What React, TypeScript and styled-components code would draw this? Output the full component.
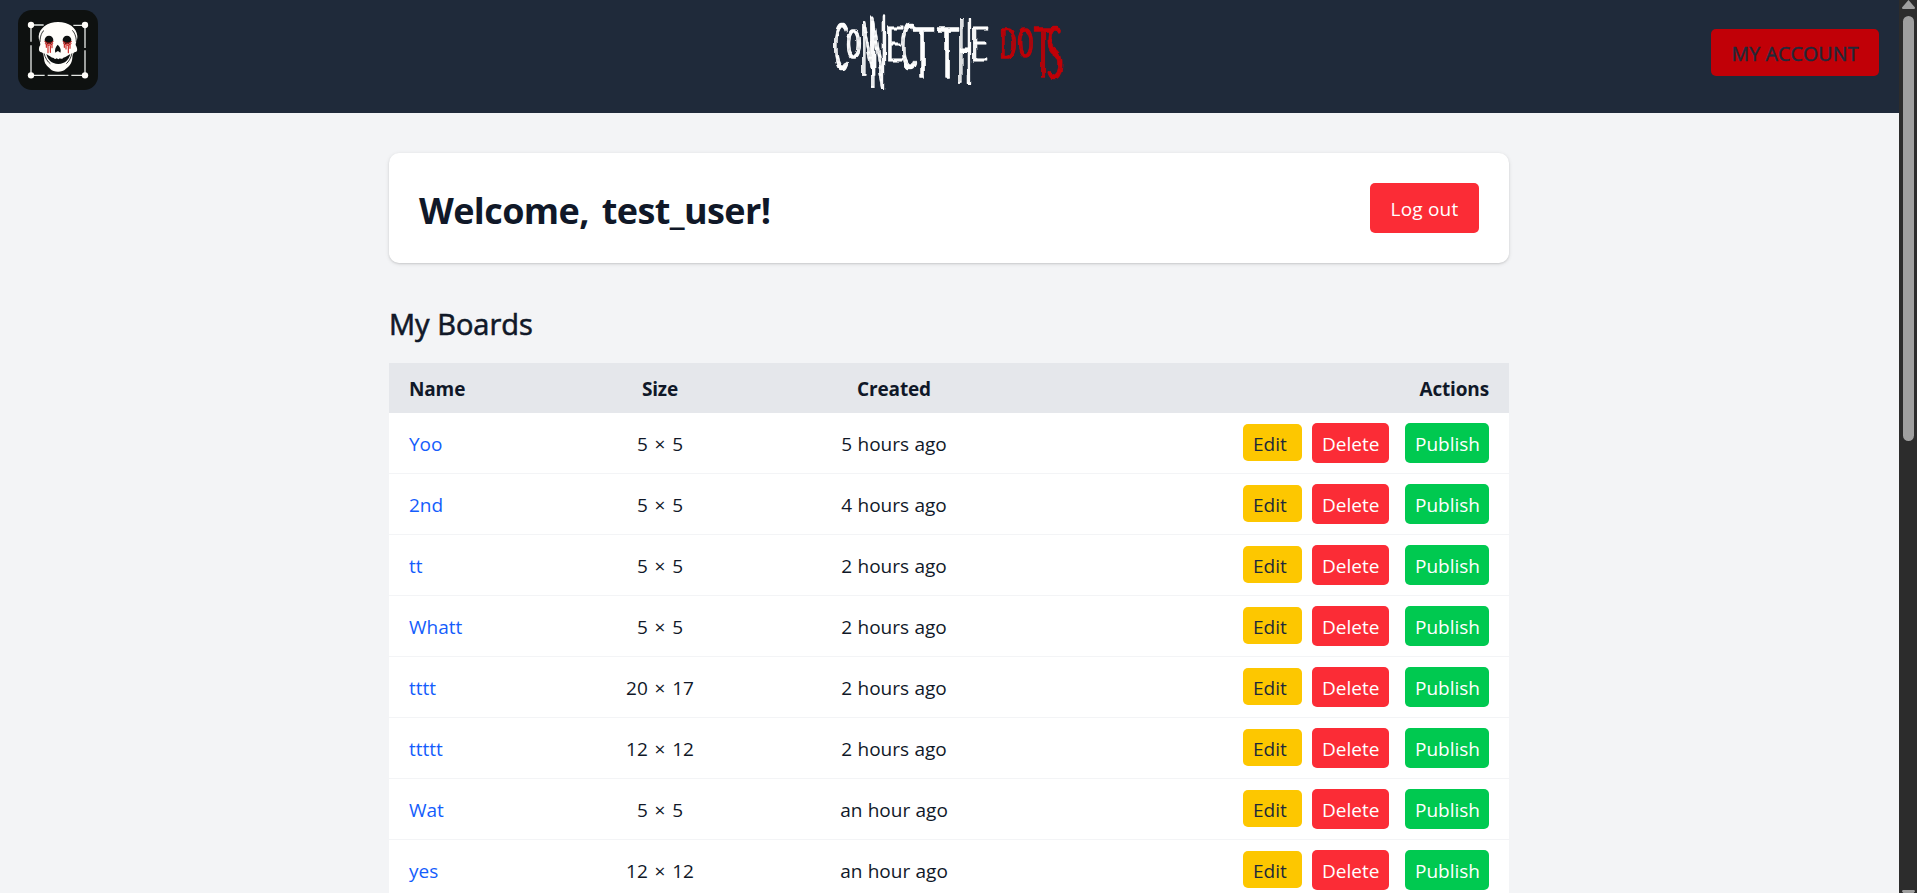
import React from "react";
import styled, { createGlobalStyle } from "styled-components";

const GlobalStyle = createGlobalStyle`
  *, *::before, *::after { box-sizing: border-box; }
  html, body { margin: 0; height: 100%; overflow: hidden; }
  body {
    font-family: "Open Sans", "Noto Sans", sans-serif;
    font-size: 19px;
    line-height: 30px;
    color: #101828;
    background: #f3f4f6;
  }
`;

const Window = styled.div`
  display: flex;
  height: 893px;
  overflow: hidden;
`;

const Page = styled.div`
  flex: 1;
  min-width: 0;
  overflow: hidden;
`;

const Header = styled.header`
  display: grid;
  grid-template-columns: 1fr auto 1fr;
  align-items: start;
  height: 113px;
  padding: 10px 20px 0 18px;
  background: #1f2a3a;
`;

const Emblem = styled.svg`
  display: block;
  width: 80px;
  height: 80px;
`;

const Wordmark = styled.svg`
  display: block;
  width: 240px;
  height: 84px;
  overflow: visible;
  font-family: Lato, "Open Sans", sans-serif;
  font-weight: 300;
`;

const AccountButton = styled.button`
  justify-self: end;
  width: 168px;
  height: 47px;
  margin-top: 19px;
  padding: 3px 0 0;
  border: 0;
  border-radius: 5px;
  background: #c10007;
  color: #1f2a3a;
  font: 500 19.5px/30px "Open Sans", sans-serif;
  letter-spacing: 0.2px;
  -webkit-text-stroke: 0.5px #1f2a3a;
  white-space: nowrap;
`;

const Main = styled.main`
  width: 1120px;
  margin: 40px auto 0 389px;
`;

const WelcomeCard = styled.section`
  display: flex;
  align-items: center;
  justify-content: space-between;
  height: 110px;
  padding: 0 30px;
  border-radius: 10px;
  background: #fff;
  box-shadow: 0 1px 4px rgba(0, 0, 0, 0.1), 0 1px 2px rgba(0, 0, 0, 0.1);
`;

const Title = styled.h1`
  margin: 5px 0 0;
  font-size: 36px;
  line-height: 45px;
  font-weight: 700;
  letter-spacing: -0.6px;
  word-spacing: 4px;
`;

const LogoutButton = styled.button`
  width: 109px;
  height: 50px;
  padding: 2px 0 0;
  border: 0;
  border-radius: 5px;
  background: #fb2c36;
  color: #fff;
  font: 400 19px/30px "Open Sans", sans-serif;
  letter-spacing: 0.2px;
`;

const SectionTitle = styled.h2`
  margin: 41px 0 19px;
  font-size: 29px;
  line-height: 40px;
  font-weight: 500;
  -webkit-text-stroke: 0.6px #101828;
`;

const Table = styled.table`
  width: 100%;
  table-layout: fixed;
  border-collapse: separate;
  border-spacing: 0;
  background: #fff;
`;

const HeadCell = styled.th<{ $align?: string }>`
  height: 50px;
  padding: 2px 20px 0;
  background: #e5e7eb;
  font-weight: 700;
  letter-spacing: -0.15px;
  text-align: ${(p) => p.$align ?? "left"};
`;

const Cell = styled.td<{ $align?: string; $wordGap?: number }>`
  height: 61px;
  padding: 2px 20px 0;
  border-bottom: 1px solid #f3f4f6;
  text-align: ${(p) => p.$align ?? "left"};
  word-spacing: ${(p) => p.$wordGap ?? 0}px;
  white-space: nowrap;
`;

const ActionCell = styled(Cell)`
  padding: 0 20px;
`;

const BoardLink = styled.a`
  color: #155dfc;
  text-decoration: none;
`;

const Actions = styled.div`
  display: flex;
  justify-content: flex-end;
  align-items: flex-start;
  height: 40px;
`;

const ActionButton = styled.button<{ $kind: "edit" | "delete" | "publish" }>`
  width: ${(p) => ({ edit: 59, delete: 77, publish: 84 })[p.$kind]}px;
  height: ${(p) => (p.$kind === "edit" ? 37 : 40)}px;
  margin: ${(p) => ({ edit: "1px 10px 0 0", delete: "0 16px 0 0", publish: "0" })[p.$kind]};
  padding: ${(p) => (p.$kind === "edit" ? "2px 0 0 10px" : "1px 0 0 10px")};
  border: 0;
  border-radius: 5px;
  background: ${(p) => ({ edit: "#fdc700", delete: "#fb2c36", publish: "#00c950" })[p.$kind]};
  color: ${(p) => (p.$kind === "edit" ? "#1e2939" : "#fff")};
  font: 400 19px/30px "Open Sans", sans-serif;
  text-align: left;
  white-space: nowrap;
`;

const ScrollTrack = styled.div`
  display: flex;
  flex-direction: column;
  align-items: center;
  width: 18px;
  background: #2c2c2c;
`;

const ScrollArrow = styled.svg`
  display: block;
  flex: none;
  width: 13px;
  height: 9px;
  fill: #9f9f9f;
`;

const ScrollThumb = styled.div`
  width: 11px;
  height: 425px;
  margin: 7px 0 449px;
  flex: none;
  border-radius: 6px;
  background: #9f9f9f;
`;

type Board = { name: string; size: string; created: string };

const boards: Board[] = [
  { name: "Yoo", size: "5 × 5", created: "5 hours ago" },
  { name: "2nd", size: "5 × 5", created: "4 hours ago" },
  { name: "tt", size: "5 × 5", created: "2 hours ago" },
  { name: "Whatt", size: "5 × 5", created: "2 hours ago" },
  { name: "tttt", size: "20 × 17", created: "2 hours ago" },
  { name: "ttttt", size: "12 × 12", created: "2 hours ago" },
  { name: "Wat", size: "5 × 5", created: "an hour ago" },
  { name: "yes", size: "12 × 12", created: "an hour ago" },
];

function SkullEmblem() {
  return (
    <Emblem viewBox="54 30 240 240">
      <rect x="54" y="30" width="240" height="240" rx="42" fill="#0e1110" />
      <path
        d="M93 75H131M220 76H255M93 75V125M93 136V226H134M143 226H205M214 226H255V151M255 144V75"
        fill="none"
        stroke="#e4e7e4"
        strokeWidth="4"
      />
      <g fill="#fffefa">
        <circle cx="93" cy="75" r="9.5" />
        <circle cx="255" cy="75" r="9.5" />
        <circle cx="93" cy="226" r="9.5" />
        <circle cx="255" cy="226" r="9.5" />
        <path d="M174 66C143 66 118 84 116 109C115 120 122 126 121 135C115 143 116 154 121 156C130 157 130 161 132 174C133 193 141 197 151 207C160 217 187 218 197 207C207 199 215 193 217 174C218 160 220 157 229 155C234 151 231 142 227 135C227 126 233 121 232 108C230 83 206 66 174 66Z" />
      </g>
      <g fill="#0e1110">
        <circle cx="147" cy="120" r="13" />
        <circle cx="201" cy="120" r="13" />
        <path d="M173 134C167 140 163 150 166 158L172 154L175 154L181 158C185 149 179 139 173 134Z" />
        <path d="M139 162C147 166 153 173 161 174Q165 180 170 175Q175 180 180 175Q185 179 190 173C199 171 204 165 211 162C207 179 196 191 175 192C154 191 143 179 139 162Z" />
      </g>
      <path
        d="M120 126C120 108 126 96 132 91M229 126C229 108 222 96 217 91M132 160C136 174 143 186 151 191M216 160C212 176 206 185 199 191"
        fill="none"
        stroke="#0e1110"
        strokeWidth="2.5"
      />
      <path
        d="M135 125Q147 135 159 125M190 125Q202 135 214 125M136 131Q147 140 158 131M191 131Q202 140 213 131M144 136V158M151 138V157M139 133V142M156 133V143M205 136V158M198 138V147M193 133V142M210 133V145"
        fill="none"
        stroke="#c9201c"
        strokeWidth="3.4"
        strokeLinecap="round"
      />
    </Emblem>
  );
}

/* Drawn box of each letter, in pixels of the wordmark. */
type Glyph = { char: string; x: number; w: number; top: number; bottom: number };

const CAP_HEIGHT = 0.72;

/* Left bearing and drawn width of the letters, in em. */
const metrics: Record<string, [number, number]> = {
  C: [0.05, 0.6],
  O: [0.05, 0.7],
  N: [0.09, 0.56],
  E: [0.09, 0.44],
  T: [0.01, 0.56],
  H: [0.09, 0.57],
  D: [0.09, 0.62],
  S: [0.05, 0.46],
};

const whiteGlyphs: Glyph[] = [
  { char: "C", x: 6, w: 12, top: 13, bottom: 59 },
  { char: "O", x: 19, w: 11, top: 20, bottom: 47 },
  { char: "N", x: 34, w: 11, top: 11, bottom: 65 },
  { char: "N", x: 43, w: 12, top: 6, bottom: 78 },
  { char: "E", x: 59, w: 14, top: 17, bottom: 51 },
  { char: "C", x: 74, w: 12, top: 13, bottom: 59 },
  { char: "T", x: 84, w: 19, top: 17, bottom: 67 },
  { char: "T", x: 109, w: 19, top: 17, bottom: 67 },
  { char: "H", x: 131, w: 10, top: 7, bottom: 73 },
  { char: "E", x: 145, w: 13, top: 17, bottom: 51 },
];

const redGlyphs: Glyph[] = [
  { char: "D", x: 173, w: 13, top: 18, bottom: 48 },
  { char: "O", x: 190, w: 13, top: 19, bottom: 47 },
  { char: "T", x: 206, w: 16, top: 18, bottom: 67 },
  { char: "S", x: 219, w: 14, top: 16, bottom: 69 },
];

function GlyphRun({ glyphs, color }: { glyphs: Glyph[]; color: string }) {
  return (
    <g fill={color} stroke={color} strokeLinejoin="round">
      {glyphs.map((g, i) => {
        const [bearing, ink] = metrics[g.char];
        const size = (g.bottom - g.top) / CAP_HEIGHT;
        const squeeze = g.w / (ink * size);
        const left = g.x - bearing * size * squeeze;
        return (
          <text
            key={i}
            fontSize={size}
            strokeWidth={0.9 / Math.sqrt(squeeze)}
            transform={`translate(${left} ${g.bottom}) scale(${squeeze} 1)`}
          >
            {g.char}
          </text>
        );
      })}
    </g>
  );
}

function DotsWordmark() {
  return (
    <Wordmark viewBox="0 0 240 84">
      <filter id="ragged" x="-5%" y="-10%" width="110%" height="120%" colorInterpolationFilters="sRGB">
        <feMorphology in="SourceGraphic" operator="dilate" radius="1 0" result="thick" />
        <feTurbulence type="fractalNoise" baseFrequency="0.08 0.05" numOctaves="2" seed="4" result="noise" />
        <feDisplacementMap in="thick" in2="noise" scale="5" xChannelSelector="R" yChannelSelector="G" />
      </filter>
      <g filter="url(#ragged)">
        <GlyphRun glyphs={whiteGlyphs} color="#ffffff" />
        <GlyphRun glyphs={redGlyphs} color="#c10007" />
      </g>
    </Wordmark>
  );
}

export default function App() {
  return (
    <Window>
      <GlobalStyle />
      <Page>
        <Header>
          <SkullEmblem />
          <DotsWordmark />
          <AccountButton>MY ACCOUNT</AccountButton>
        </Header>
        <Main>
          <WelcomeCard>
            <Title>Welcome, test_user!</Title>
            <LogoutButton>Log out</LogoutButton>
          </WelcomeCard>
          <SectionTitle>My Boards</SectionTitle>
          <Table>
            <colgroup>
              <col style={{ width: 154 }} />
              <col style={{ width: 234 }} />
              <col style={{ width: 234 }} />
              <col />
            </colgroup>
            <thead>
              <tr>
                <HeadCell>Name</HeadCell>
                <HeadCell $align="center">Size</HeadCell>
                <HeadCell $align="center">Created</HeadCell>
                <HeadCell $align="right">Actions</HeadCell>
              </tr>
            </thead>
            <tbody>
              {boards.map((b) => (
                <tr key={b.name}>
                  <Cell>
                    <BoardLink>{b.name}</BoardLink>
                  </Cell>
                  <Cell $align="center" $wordGap={1.8}>{b.size}</Cell>
                  <Cell $align="center" $wordGap={0.4}>{b.created}</Cell>
                  <ActionCell>
                    <Actions>
                      <ActionButton $kind="edit">Edit</ActionButton>
                      <ActionButton $kind="delete">Delete</ActionButton>
                      <ActionButton $kind="publish">Publish</ActionButton>
                    </Actions>
                  </ActionCell>
                </tr>
              ))}
            </tbody>
          </Table>
        </Main>
      </Page>
      <ScrollTrack>
        <ScrollArrow viewBox="0 0 13 9">
          <path d="M6.5 0L13 7.5Q13 9 12 9H1Q0 9 0 7.5Z" />
        </ScrollArrow>
        <ScrollThumb />
        <ScrollArrow viewBox="0 0 13 9">
          <path d="M6.5 9L13 1.5Q13 0 12 0H1Q0 0 0 1.5Z" />
        </ScrollArrow>
      </ScrollTrack>
    </Window>
  );
}
